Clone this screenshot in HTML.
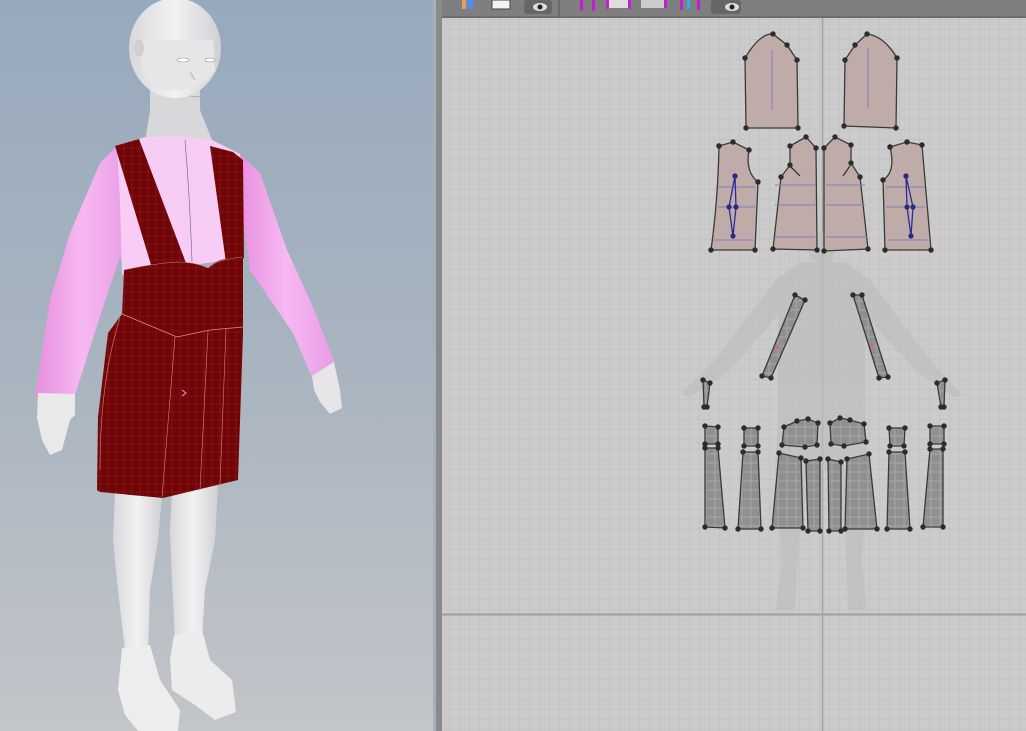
<!DOCTYPE html>
<html><head><meta charset="utf-8"><style>
html,body{margin:0;padding:0;width:1026px;height:731px;overflow:hidden;background:#cbcbcb}
svg{display:block}
</style></head><body>
<svg width="1026" height="731" viewBox="0 0 1026 731" xmlns="http://www.w3.org/2000/svg">
<defs>
<linearGradient id="bg" x1="0" y1="0" x2="0" y2="1">
<stop offset="0" stop-color="#97a9bd"/><stop offset="0.5" stop-color="#a9b4c0"/><stop offset="1" stop-color="#c2c5c9"/>
</linearGradient>
<linearGradient id="skin" x1="0" y1="0" x2="1" y2="0">
<stop offset="0" stop-color="#d8d8da"/><stop offset="0.5" stop-color="#f2f2f4"/><stop offset="1" stop-color="#cfd0d3"/>
</linearGradient>
<linearGradient id="pink" x1="0" y1="0" x2="1" y2="0">
<stop offset="0" stop-color="#e88fe0"/><stop offset="0.5" stop-color="#f6b8f2"/><stop offset="1" stop-color="#e89de4"/>
</linearGradient>
<pattern id="grid" width="10" height="10" patternUnits="userSpaceOnUse">
<path d="M10 0V10M0 10H10" fill="none" stroke="#bcbcbc" stroke-width="1"/>
</pattern>
<pattern id="plaid" width="8" height="8" patternUnits="userSpaceOnUse">
<rect width="8" height="8" fill="#6e0608"/><path d="M0 4H8M4 0V8" stroke="#8c1216" stroke-width="0.8"/>
</pattern>
<pattern id="gplaid" width="9" height="9" patternUnits="userSpaceOnUse">
<rect width="9" height="9" fill="#8f8f8f"/><path d="M0 4H9M4 0V9" stroke="#a3a3a3" stroke-width="1.2"/>
</pattern>
<marker id="d" markerWidth="6" markerHeight="6" refX="3" refY="3" markerUnits="userSpaceOnUse"><circle cx="3" cy="3" r="2.7" fill="#2c2c2c"/></marker>
<marker id="b" markerWidth="6" markerHeight="6" refX="3" refY="3" markerUnits="userSpaceOnUse"><circle cx="3" cy="3" r="2.6" fill="#2a2a80"/></marker>
</defs>

<rect x="0" y="0" width="436" height="731" fill="url(#bg)"/>
<path d="M115 490 L162 495 L158 540 L150 590 L148 650 L125 650 L118 590 L113 540Z" fill="url(#skin)"/>
<path d="M172 492 L218 485 L215 540 L205 590 L202 640 L175 640 L172 580 L170 530Z" fill="url(#skin)"/>
<path d="M122 648 L150 645 L160 680 L180 710 L178 731 L138 731 L125 715 L118 690Z" fill="#ededee"/>
<path d="M174 635 L202 630 L210 660 L232 680 L236 712 L215 720 L195 705 L172 690 L170 660Z" fill="#ececed"/>
<path d="M150 70 L200 70 L200 110 L212 140 L145 142 L150 110Z" fill="#d8d8db"/>
<ellipse cx="175" cy="48" rx="46" ry="50" fill="url(#skin)"/>
<path d="M142 70 Q150 92 178 90 Q205 88 215 70 L213 40 L140 40Z" fill="#e6e6e8"/>
<ellipse cx="183" cy="60" rx="6" ry="2" fill="#fff" stroke="#999" stroke-width="0.6"/>
<ellipse cx="210" cy="60" rx="5" ry="2" fill="#fff" stroke="#999" stroke-width="0.6"/>
<path d="M190 72 L195 80 M190 96 Q197 98 205 95" stroke="#b0b0b3" stroke-width="1" fill="none"/>
<ellipse cx="139" cy="48" rx="5" ry="9" fill="#d0d0d3"/>
<path d="M117 146 L100 163 L70 233 L50 300 L35 397 L75 395 L103 307 L120 257 L127 273 L130 180Z" fill="url(#pink)"/>
<path d="M238 152 L260 173 L287 250 L313 307 L335 363 L312 377 L293 333 L250 270 L240 200Z" fill="url(#pink)"/>
<path d="M38 393 L75 394 L75 415 L70 420 L62 450 L50 455 L42 440 L37 418Z" fill="#e9e9ea"/>
<path d="M312 376 L334 362 L340 390 L342 408 L330 414 L320 402 L314 390Z" fill="#e6e6e8"/>
<path d="M117 146 L145 137 L176 136 L212 140 L240 154 L243 258 L122 275 L120 200Z" fill="#f7cdf5"/>
<path d="M185 140 Q190 200 192 262" stroke="#8a6a88" stroke-width="0.7" fill="none"/>
<path d="M118 150 Q126 160 128 175 L133 200" stroke="#c98ac5" stroke-width="0.8" fill="none"/>
<path d="M115 146 L139 139 L186 263 L152 268Z" fill="url(#plaid)"/>
<path d="M210 146 L233 152 L243 160 L244 258 L226 263 Z" fill="url(#plaid)"/>
<path d="M124 270 Q150 264 177 262 Q195 262 208 268 Q218 259 227 259 L243 257 L243 330 L210 330 L177 337 L122 315Z" fill="url(#plaid)"/>
<path d="M124 270 Q150 264 177 262 Q195 262 208 268 Q218 259 243 257" stroke="#c88" stroke-width="0.6" fill="none"/>
<path d="M122 314 L177 337 L210 330 L243 327 L243 333 L238 480 L163 498 L100 492 L97 490 L98 417 L108 333Z" fill="url(#plaid)"/>
<path d="M122 314 L177 337 L210 330 L243 327" stroke="#d89090" stroke-width="0.8" fill="none"/>
<path d="M175 337 L162 497 M208 331 L200 490 M226 329 L220 485 M120 318 Q100 380 100 470" stroke="#c88" stroke-width="0.6" fill="none"/>
<path d="M182 390 L186 393 L182 396" stroke="#f0a0e0" stroke-width="1" fill="none"/>

<rect x="433" y="0" width="3" height="731" fill="#a8b1ba"/>
<rect x="436" y="0" width="6" height="731" fill="#8a8a8a"/>

<rect x="442" y="18" width="584" height="713" fill="#cbcbcb"/>
<rect x="442" y="18" width="584" height="713" fill="url(#grid)"/>
<line x1="442" y1="614.5" x2="1026" y2="614.5" stroke="#9f9f9f" stroke-width="2"/>
<line x1="822.5" y1="18" x2="822.5" y2="731" stroke="#a2a2a2" stroke-width="1.5"/>
<g fill="#bdbdbd" opacity="0.7">
<ellipse cx="822" cy="248" rx="14" ry="16"/>
<path d="M800 262 L845 262 L870 280 L930 360 L962 395 L955 398 L915 370 L865 315 L865 420 L868 470 L862 560 L867 610 L848 610 L845 520 L830 470 L815 470 L800 520 L795 610 L776 610 L782 560 L775 470 L778 420 L778 315 L730 370 L688 398 L682 393 L715 360 L776 280Z"/>
</g>

<g fill="#bfaca8" stroke="#3a3a3a" stroke-width="1.3" marker-start="url(#d)" marker-mid="url(#d)">
<path d="M745 58 Q760 33 773 34 L787 45 L797 60 L798 128 L746 128Z"/>
<path d="M845 60 L855 45 L867 34 Q884 36 897 58 L896 128 L844 126Z"/>
<path d="M719 146 L733 142 L749 150 Q745 172 758 182 L755 250 L711 250 Q718 200 719 146Z"/>
<path d="M790 146 L806 137 L816 148 L817 250 L773 249 L781 177 L790 165Z"/>
<path d="M824 148 L835 137 L851 145 L851 163 L860 177 L868 249 L824 251Z"/>
<path d="M890 147 L907 142 L922 145 L931 250 L885 250 L883 180 Q896 172 890 147Z"/>
</g>
<g stroke="#8080c0" stroke-width="1" fill="none">
<line x1="772" y1="50" x2="772" y2="110"/><line x1="868" y1="48" x2="868" y2="108"/>
<path d="M775 185H815M775 205H815M775 237H815M826 185H865M826 205H865M826 237H867M718 187H755M718 207H755M714 240H753M886 187H925M886 207H925M888 240H928"/>
</g>
<g stroke="#2a2a9a" stroke-width="1.3" fill="none" marker-start="url(#b)" marker-mid="url(#b)" marker-end="url(#b)">
<path d="M735 176 L729 207 L733 236 L736 207Z"/><path d="M906 176 L907 207 L911 236 L913 207Z"/>
</g>
<path d="M790 166 L800 176 M850 166 L843 176" stroke="#333" stroke-width="1.3"/>

<g fill="url(#gplaid)" stroke="#3a3a3a" stroke-width="1.3" marker-start="url(#d)" marker-mid="url(#d)">
<path d="M795 295 L805 300 L771 378 L762 376Z"/>
<path d="M853 295 L862 295 L888 377 L879 378Z"/>
<path d="M703 380 L710 383 L707 407 L704 407Z"/>
<path d="M937 383 L945 380 L944 407 L941 407Z"/>
<path d="M705 426 L718 427 L718 444 L705 444Z"/>
<path d="M744 428 L758 428 L758 446 L744 446Z"/>
<path d="M784 427 L797 421 L808 419 L818 423 L817 445 L805 447 L782 445Z"/>
<path d="M830 423 L840 418 L850 420 L864 424 L866 442 L844 446 L831 444Z"/>
<path d="M889 428 L905 428 L904 446 L890 446Z"/>
<path d="M930 426 L944 426 L944 444 L930 444Z"/>
<path d="M705 448 L718 448 L725 528 L705 527Z"/>
<path d="M743 452 L758 452 L761 529 L738 529Z"/>
<path d="M779 453 L801 458 L803 528 L772 528Z"/>
<path d="M806 461 L820 459 L820 531 L808 531Z"/>
<path d="M828 459 L841 462 L841 531 L829 531Z"/>
<path d="M847 459 L869 454 L877 529 L845 529Z"/>
<path d="M889 452 L905 452 L910 529 L887 529Z"/>
<path d="M930 449 L943 449 L943 527 L923 527Z"/>
</g>
<circle cx="778" cy="347" r="2" fill="#d86a6a"/><circle cx="872" cy="346" r="2" fill="#d86a6a"/>

<rect x="442" y="0" width="584" height="17" fill="#7f7f7f"/>
<rect x="442" y="16" width="584" height="2" fill="#6e6e6e"/>
<rect x="558" y="0" width="2" height="17" fill="#6a6a6a"/>
<rect x="462" y="0" width="12" height="9" fill="#e8a050"/><rect x="466" y="0" width="8" height="9" fill="#5a8ad8"/>
<rect x="492" y="0" width="18" height="9" fill="#f2f2f2" stroke="#444" stroke-width="1"/>
<rect x="524" y="0" width="28" height="14" rx="3" fill="#666"/><ellipse cx="540" cy="7" rx="7" ry="4" fill="#ddd"/><circle cx="540" cy="7" r="2.5" fill="#222"/>
<g fill="#c020d0"><rect x="580" y="0" width="3" height="11"/><rect x="592" y="0" width="3" height="11"/><rect x="606" y="0" width="3" height="9"/><rect x="628" y="0" width="3" height="9"/><rect x="664" y="0" width="3" height="8"/><rect x="680" y="0" width="3" height="10"/><rect x="697" y="0" width="3" height="10"/></g>
<rect x="609" y="0" width="19" height="8" fill="#ddd"/><rect x="641" y="0" width="23" height="8" fill="#ccc"/>
<rect x="687" y="0" width="3" height="9" fill="#30b0e0"/>
<rect x="711" y="0" width="30" height="14" rx="3" fill="#666"/><ellipse cx="732" cy="7" rx="7" ry="4" fill="#ddd"/><circle cx="732" cy="7" r="2.5" fill="#222"/>
</svg>
</body></html>
